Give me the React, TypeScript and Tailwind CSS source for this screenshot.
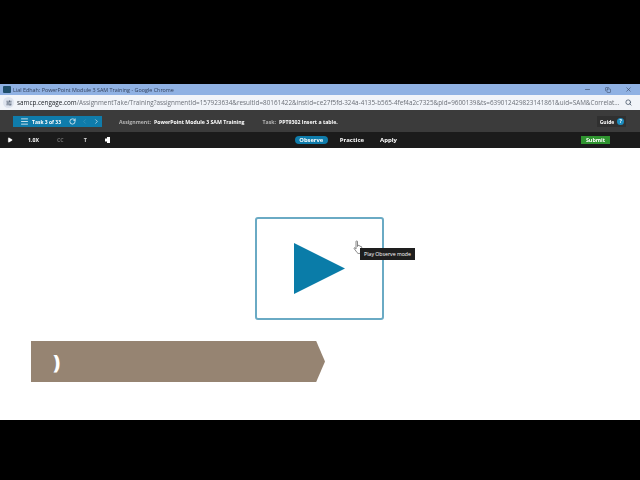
import { RotateCw, ChevronLeft, ChevronRight, Menu, Search, SlidersHorizontal, Minus, X, Copy, Play } from "lucide-react";

const font = "font-['Open_Sans','Liberation_Sans',sans-serif]";

function TitleBar() {
  return (
    <div className="flex h-[11px] items-center bg-[#8fb1e3] pl-[3px]">
      <div className="h-[7px] w-[8px] rounded-[1px] bg-[#1f4e6b]" />
      <span className="ml-[2px] text-[5.4px] leading-[8px] text-[#33415c]">Lial Edhah: PowerPoint Module 3 SAM Training - Google Chrome</span>
      <div className="ml-auto flex items-center gap-[14px] pr-[8px] text-[#33415c]">
        <Minus size={7} strokeWidth={2} />
        <Copy size={6} strokeWidth={2} />
        <X size={7} strokeWidth={2} />
      </div>
    </div>
  );
}

function UrlBar() {
  return (
    <div className="flex h-[15px] items-center bg-[#f1f4f9] pl-[3px] pr-[8px]">
      <div className="flex h-[11px] w-[11px] shrink-0 items-center justify-center rounded-full bg-[#dde3ee] text-[#3b4a5e]">
        <SlidersHorizontal size={6} strokeWidth={2.5} />
      </div>
      <span className="ml-[3px] whitespace-nowrap text-[6.33px] leading-[10px] text-[#6c7078]">
        <span className="text-[#20242a]">samcp.cengage.com</span>
        /AssignmentTake/Training?assignmentId=157923634&amp;resultId=80161422&amp;instId=ce27f5fd-324a-4135-b565-4fef4a2c7325&amp;pid=9600139&amp;ts=639012429823141861&amp;uid=SAM&amp;Correlat...
      </span>
      <Search size={7} strokeWidth={2.5} className="ml-auto shrink-0 text-[#3b4a5e]" />
    </div>
  );
}

function TaskBar() {
  return (
    <div className="flex h-[22px] items-center bg-[#3b3b3b] pl-[13px] pr-[14px] pt-[1px]">
      <div className="flex h-[11px] w-[89px] items-center bg-[#0f7cab] pl-[7px] text-white">
        <Menu size={9} strokeWidth={2} />
        <span className="ml-[3px] text-[5px] font-bold leading-[8px]">Task 3 of 33</span>
        <RotateCw size={7} strokeWidth={2.5} className="ml-[8px]" />
        <ChevronLeft size={7} strokeWidth={2} className="ml-[5px] text-[#4a9cc0]" />
        <ChevronRight size={7} strokeWidth={2} className="ml-[5px]" />
      </div>
      <span className="ml-[17px] text-[5.2px] font-bold leading-[8px] text-[#b5b5b5]">Assignment:</span>
      <span className="ml-[3px] text-[5.2px] font-bold leading-[8px] text-white">PowerPoint Module 3 SAM Training</span>
      <span className="ml-[18px] text-[5.2px] font-bold leading-[8px] text-[#b5b5b5]">Task:</span>
      <span className="ml-[3px] text-[5.2px] font-bold leading-[8px] text-white">PPT9302 Insert a table.</span>
      <div className="ml-auto flex h-[11px] w-[29px] items-center justify-center gap-[3px] bg-[#303030] pl-[1px]">
        <span className="text-[5px] font-bold leading-[8px] text-white">Guide</span>
        <span className="flex h-[7px] w-[7px] items-center justify-center rounded-full bg-[#1b8dc0] text-[5px] font-bold leading-[7px] text-white">?</span>
      </div>
    </div>
  );
}

function ModeBar() {
  return (
    <div className="relative flex h-[16px] items-center bg-[#1b1b1b] pl-[7px] pr-[30px] text-white">
      <Play size={6} fill="currentColor" strokeWidth={1} />
      <span className="ml-[15px] w-[12px] text-[5.2px] font-bold leading-[8px]">1.0X</span>
      <span className="ml-[17px] text-[5.2px] font-bold leading-[8px] text-[#6e6e6e]">CC</span>
      <span className="ml-[20px] text-[5.4px] font-bold leading-[8px] text-[#d8d8d8]">T</span>
      <svg width="5" height="6" viewBox="0 0 5 6" className="ml-[18px] block">
        <path d="M0 1.5h2V0h3v6H2V4.5H0z" fill="currentColor" />
      </svg>
      <div className="ml-[185px] flex h-[8px] w-[33px] items-center justify-center rounded-full bg-[#0f7cab]">
        <span className="text-[5.8px] font-bold leading-[8px]">Observe</span>
      </div>
      <span className="ml-[12px] text-[6px] font-bold leading-[8px]">Practice</span>
      <span className="ml-[16px] text-[6px] font-bold leading-[8px]">Apply</span>
      <div className="ml-auto flex h-[8px] w-[29px] items-center justify-center bg-[#2f9430]">
        <span className="text-[5.4px] font-bold leading-[8px]">Submit</span>
      </div>
    </div>
  );
}

function PlayBox() {
  return (
    <div className="relative ml-[255px] flex h-[103px] w-[129px] items-center rounded-[3px] border-2 border-[#6aaac4] bg-white pl-[37px]">
      <svg width="52" height="52" viewBox="0 0 52 52" className="block">
        <polygon points="0,0 51,25.5 0,51" fill="#0a7ca8" />
      </svg>
      <svg width="12" height="15" viewBox="0 0 12 15" className="absolute left-[96px] top-[21px]">
        <path d="M3 1.5c0-.8 1.5-.8 1.5 0v5l.5-1c.8-.4 1.2 0 1.2.5.6-.4 1.2 0 1.2.5.6-.3 1.3 0 1.3.7v3.3c0 1.6-1 3-2.6 3H6c-1.2 0-1.8-.6-2.4-1.6L1.2 8.6c-.3-.7.4-1.2 1-.7L3 8.8z" fill="#fff" stroke="#555" strokeWidth="0.7" />
      </svg>
      <div className="absolute left-[103px] top-[29px] flex h-[12px] w-[55px] items-center justify-center bg-[#1e1e1e]">
        <span className="whitespace-nowrap text-[5.2px] leading-[8px] text-white">Play Observe mode</span>
      </div>
    </div>
  );
}

export default function App() {
  return (
    <div className={`flex h-[480px] w-[640px] flex-col overflow-hidden bg-black ${font}`}>
      <div className="h-[84px] shrink-0" />
      <div className="shrink-0 blur-[0.3px]">
        <TitleBar />
        <UrlBar />
        <TaskBar />
        <ModeBar />
      </div>
      <div className="h-[272px] shrink-0 bg-white pt-[69px]">
        <PlayBox />
        <div className="ml-[31px] mt-[21px] flex h-[41px] w-[294px] items-center bg-[#968472] pl-[22px] [clip-path:polygon(0_0,97%_0,100%_50%,97%_100%,0_100%)]">
          <span className="text-[20px] font-extrabold leading-none text-white">)</span>
        </div>
      </div>
    </div>
  );
}
